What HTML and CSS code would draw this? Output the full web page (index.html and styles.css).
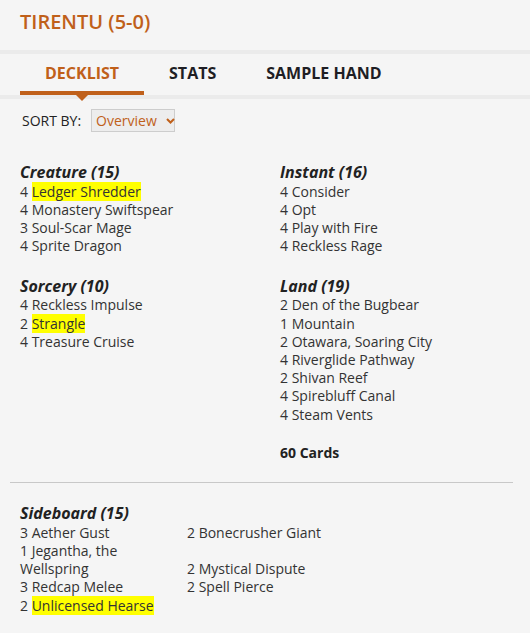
FILE: index.html
```html
<!DOCTYPE html>
<html>
<head>
<meta charset="utf-8">
<link rel="stylesheet" href="styles.css">
</head>
<body>
<div class="page">
  <h1 class="title">TIRENTU (5-0)</h1>
  <div class="stripe"></div>
  <nav class="tabs">
    <span class="tab active">DECKLIST</span>
    <span class="tab">STATS</span>
    <span class="tab">SAMPLE HAND</span>
  </nav>
  <div class="stripe"></div>
  <div class="sort">
    <span class="sort-label">SORT BY:</span>
    <span class="select">Overview
      <svg class="chev" width="9" height="6" viewBox="0 0 9 6"><path d="M1 1 L4.5 4.5 L8 1" fill="none" stroke="#c0601a" stroke-width="2"/></svg>
    </span>
  </div>
  <div class="deck">
    <div class="col">
      <div class="group">
        <div class="head">Creature (15)</div>
        <div class="card">4 <span class="hl">Ledger Shredder</span></div>
        <div class="card">4 Monastery Swiftspear</div>
        <div class="card">3 Soul-Scar Mage</div>
        <div class="card">4 Sprite Dragon</div>
      </div>
      <div class="group">
        <div class="head">Sorcery (10)</div>
        <div class="card">4 Reckless Impulse</div>
        <div class="card">2 <span class="hl">Strangle</span></div>
        <div class="card">4 Treasure Cruise</div>
      </div>
    </div>
    <div class="col">
      <div class="group">
        <div class="head">Instant (16)</div>
        <div class="card">4 Consider</div>
        <div class="card">4 Opt</div>
        <div class="card">4 Play with Fire</div>
        <div class="card">4 Reckless Rage</div>
      </div>
      <div class="group">
        <div class="head">Land (19)</div>
        <div class="card">2 Den of the Bugbear</div>
        <div class="card">1 Mountain</div>
        <div class="card">2 Otawara, Soaring City</div>
        <div class="card">4 Riverglide Pathway</div>
        <div class="card">2 Shivan Reef</div>
        <div class="card">4 Spirebluff Canal</div>
        <div class="card">4 Steam Vents</div>
      </div>
      <div class="total">60 Cards</div>
    </div>
  </div>
  <hr class="sep">
  <div class="side">
    <div class="head">Sideboard (15)</div>
    <div class="side-grid">
      <div class="card">3 Aether Gust</div>
      <div class="card">2 Bonecrusher Giant</div>
      <div class="card">1 Jegantha, the Wellspring</div>
      <div class="card">2 Mystical Dispute</div>
      <div class="card">3 Redcap Melee</div>
      <div class="card">2 Spell Pierce</div>
      <div class="card">2 <span class="hl">Unlicensed Hearse</span></div>
    </div>
  </div>
</div>
</body>
</html>
```

FILE: styles.css
```css
html, body {
  margin: 0;
  padding: 0;
  background: #f5f5f5;
}
body {
  font-family: "Open Sans", "Liberation Sans", sans-serif;
  color: #333;
  font-size: 14px;
}
.page {
  width: 530px;
  overflow: hidden;
}
.title {
  margin: 0;
  padding: 8px 0 0 20px;
  font-size: 20px;
  font-weight: 600;
  line-height: 27px;
  color: #c0601a;
}
.stripe {
  height: 4px;
  background: #ebebeb;
}
.title + .stripe {
  margin-top: 15px;
}
.tabs {
  display: flex;
  padding-left: 20px;
  height: 41px;
}
.tab {
  position: relative;
  padding: 8px 25px 0;
  font-size: 16px;
  font-weight: 700;
  line-height: 22px;
  color: #1e1e24;
  box-sizing: border-box;
  height: 41px;
}
.tab.active {
  color: #c0601a;
  border-bottom: 4px solid #c0601a;
}
.tab.active::after {
  content: "";
  position: absolute;
  left: 50%;
  bottom: -10px;
  margin-left: -6px;
  border-left: 6px solid transparent;
  border-right: 6px solid transparent;
  border-top: 6px solid #c0601a;
}
.sort {
  display: flex;
  align-items: center;
  gap: 10px;
  padding: 10px 0 0 22px;
}
.sort-label {
  color: #222;
  font-size: 14px;
  line-height: 19px;
}
.select {
  display: flex;
  align-items: center;
  gap: 9px;
  box-sizing: border-box;
  width: 84px;
  height: 23px;
  padding: 0 4px;
  border: 1px solid #cdcdcd;
  background: #ededed;
  color: #c0601a;
  font-size: 14px;
}
.chev {
  display: block;
  flex: none;
}
.deck {
  display: grid;
  grid-template-columns: 260px 1fr;
  padding: 30px 0 0 20px;
}
.group + .group {
  margin-top: 20px;
}
.head {
  font-size: 16px;
  font-weight: 700;
  font-style: italic;
  line-height: 20.8px;
  color: #222;
}
.card {
  font-size: 14px;
  line-height: 18.2px;
  color: #333;
}
.hl {
  background: #ffff00;
}
.total {
  margin-top: 20px;
  font-weight: 700;
  line-height: 18.2px;
  color: #222;
}
.sep {
  margin: 20px 0 0 10px;
  width: 503px;
  height: 1px;
  border: 0;
  background: #c8c8c8;
}
.side {
  padding: 20px 0 0 20px;
}
.side-grid {
  display: grid;
  grid-template-columns: 167px 167px;
  align-items: end;
}
```
